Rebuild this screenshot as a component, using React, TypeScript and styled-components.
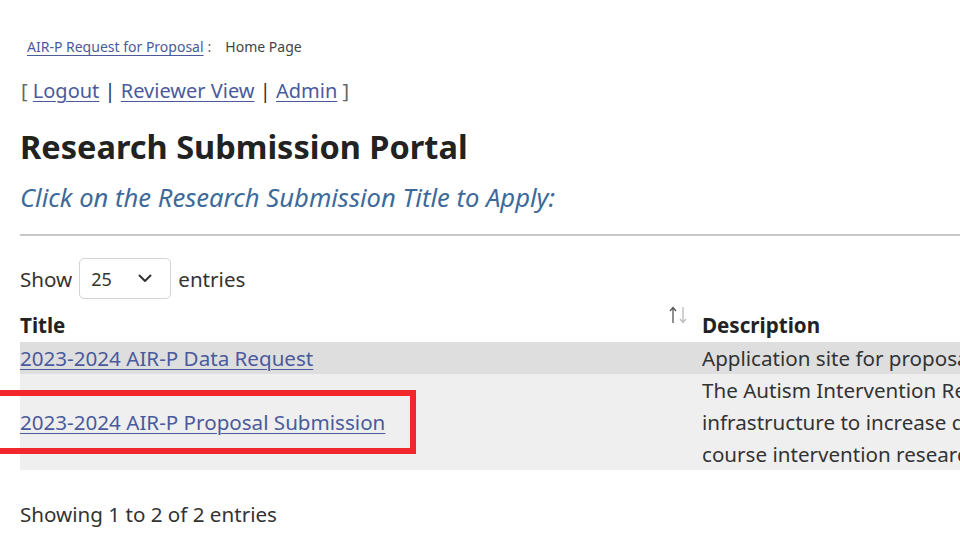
import React, { FC } from "react";
import styled, { createGlobalStyle } from "styled-components";

const GlobalStyle = createGlobalStyle`
    html, body {
        margin: 0;
        padding: 0;
        background: #ffffff;
        overflow: hidden;
    }
    body {
        width: 960px;
        height: 540px;
        font-family: "Noto Sans", "Open Sans", sans-serif;
        color: #333333;
    }
`;

const Page = styled.div`
    width: 960px;
    height: 540px;
    overflow: hidden;
    padding: 36px 0 0 20px;
    box-sizing: border-box;
    display: flex;
    flex-direction: column;
`;

const Link = styled.a`
    color: #4a5a9c;
    text-decoration: underline;
    text-underline-offset: 3px;
    text-decoration-thickness: 1px;
    cursor: pointer;
`;

const Breadcrumb = styled.div`
    font-size: 14px;
    line-height: 22px;
    height: 22px;
    padding-left: 7px;
    color: #444;
    white-space: nowrap;
`;

const Sep = styled.span`
    margin: 0 14px 0 4px;
    color: #666;
`;

const NavLine = styled.div`
    margin-top: 18px;
    font-size: 20px;
    line-height: 30px;
    height: 30px;
    color: #666;
    white-space: nowrap;
    padding-left: 1px;
`;

const Bar = styled.span`
    color: #333;
`;

const Heading = styled.h1`
    margin: 19px 0 0;
    font-size: 32.5px;
    font-weight: 700;
    line-height: 44px;
    height: 44px;
    color: #222;
    white-space: nowrap;
`;

const SubHeading = styled.h2`
    margin: 11px 0 0;
    font-size: 25.6px;
    font-style: italic;
    font-weight: 400;
    line-height: 36px;
    height: 36px;
    color: #3e6a9a;
    white-space: nowrap;
`;

const Rule = styled.hr`
    margin: 18px 0 0;
    border: none;
    height: 2px;
    background: #c9c9c9;
    width: 960px;
`;

const LengthRow = styled.div`
    margin-top: 22px;
    display: flex;
    align-items: center;
    gap: 7px;
    font-size: 20.6px;
    height: 41px;
    color: #333;
`;

const SelectBox = styled.div`
    width: 92px;
    height: 41px;
    box-sizing: border-box;
    border: 1px solid #d4d4d4;
    border-radius: 5px;
    display: flex;
    align-items: center;
    justify-content: space-between;
    padding: 0 18px 0 11px;
    font-size: 18px;
    color: #333;
`;

const Table = styled.div`
    margin-top: 10px;
    width: 1200px;
    display: grid;
    grid-template-columns: 682px 1fr;
`;

const HeadCell = styled.div`
    position: relative;
    height: 33px;
    line-height: 33px;
    font-size: 20.6px;
    font-weight: 700;
    color: #222;
`;

const SortIcon = styled.svg`
    position: absolute;
    right: 12px;
    top: -4px;
`;

const Cell = styled.div<{ $shade: string }>`
    position: relative;
    background: ${(p) => p.$shade};
    font-size: 20.6px;
    line-height: 32px;
    color: #333;
    white-space: nowrap;
    display: flex;
    flex-direction: column;
    justify-content: center;
`;

const Highlight = styled.div`
    position: absolute;
    left: -26px;
    top: 16px;
    width: 422px;
    height: 64px;
    box-sizing: border-box;
    border: 6px solid #f2272c;
    pointer-events: none;
`;

const Info = styled.div`
    margin-top: 29px;
    font-size: 20.6px;
    line-height: 30px;
    color: #333;
`;

const Chevron: FC = () => (
    <svg width="14" height="9" viewBox="0 0 14 9" fill="none">
        <path d="M1.5 1.5 L7 7 L12.5 1.5" stroke="#333" strokeWidth="2" strokeLinecap="round" strokeLinejoin="round" />
    </svg>
);

const rows = [
    {
        title: "2023-2024 AIR-P Data Request",
        shade: "#dedede",
        desc: ["Application site for proposals requesting AIR-P data"],
        boxed: false,
    },
    {
        title: "2023-2024 AIR-P Proposal Submission",
        shade: "#efefef",
        desc: [
            "The Autism Intervention Research Network on Physical Health (AIR-P) provides",
            "infrastructure to increase quality and quantity of life-",
            "course intervention research for autistic individuals",
        ],
        boxed: true,
    },
];

const App: FC = () => {
    return (
        <>
            <GlobalStyle />
            <Page>
                <Breadcrumb>
                    <Link>AIR-P Request for Proposal</Link>
                    <Sep>:</Sep>
                    Home Page
                </Breadcrumb>
                <NavLine>
                    [ <Link>Logout</Link> <Bar>|</Bar> <Link>Reviewer View</Link> <Bar>|</Bar>{" "}
                    <Link>Admin</Link> ]
                </NavLine>
                <Heading>Research Submission Portal</Heading>
                <SubHeading>Click on the Research Submission Title to Apply:</SubHeading>
                <Rule />
                <LengthRow>
                    Show
                    <SelectBox>
                        25
                        <Chevron />
                    </SelectBox>
                    entries
                </LengthRow>
                <Table>
                    <HeadCell>
                        Title
                        <SortIcon width="22" height="20" viewBox="0 0 22 20">
                            <path d="M5 18 V3 M2 6 L5 2.5 L8 6" stroke="#555" strokeWidth="1.3" fill="none" />
                            <path d="M15 2 V17 M12 14 L15 17.5 L18 14" stroke="#bbb" strokeWidth="1.3" fill="none" />
                        </SortIcon>
                    </HeadCell>
                    <HeadCell>Description</HeadCell>
                    {rows.map((r) => (
                        <React.Fragment key={r.title}>
                            <Cell $shade={r.shade}>
                                <div>
                                    <Link>{r.title}</Link>
                                </div>
                                {r.boxed && <Highlight />}
                            </Cell>
                            <Cell $shade={r.shade}>
                                {r.desc.map((line) => (
                                    <div key={line}>{line}</div>
                                ))}
                            </Cell>
                        </React.Fragment>
                    ))}
                </Table>
                <Info>Showing 1 to 2 of 2 entries</Info>
            </Page>
        </>
    );
};

export default App;
